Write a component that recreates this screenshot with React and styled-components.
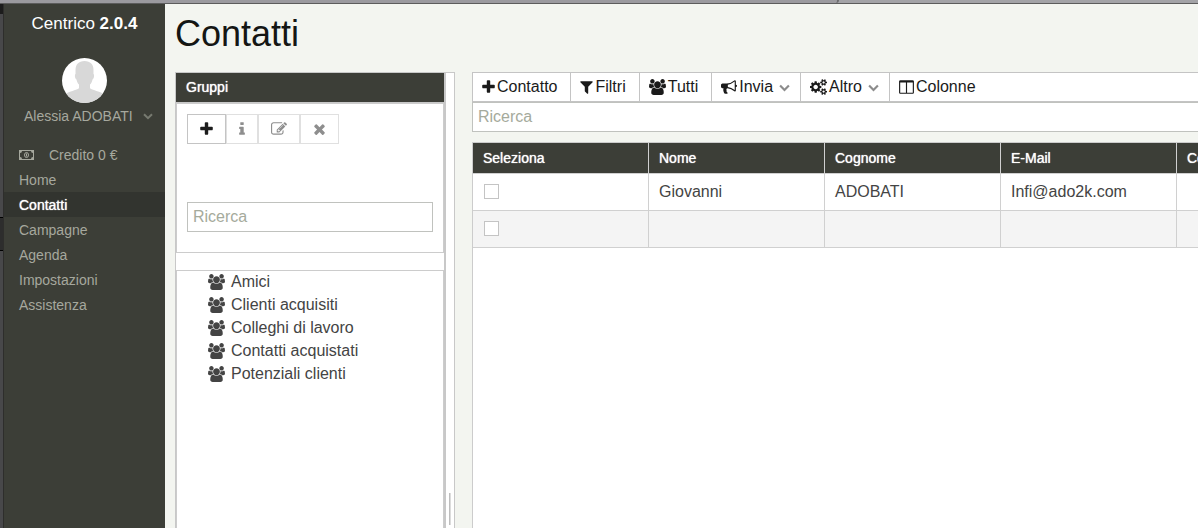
import React from 'react';
import styled, { createGlobalStyle } from 'styled-components';

const GlobalStyle = createGlobalStyle`
  * {
    box-sizing: border-box;
  }

  body {
    margin: 0;
    overflow: hidden;
    background: #f3f5f0;
    color: #444;
    font-family: 'Liberation Sans', Arial, sans-serif;
    font-size: 16px;
  }

  button,
  input {
    font: inherit;
  }
`;

const Page = styled.div`
  display: flex;
  flex-direction: column;
  height: 100vh;
  overflow: hidden;
`;

const WindowEdge = styled.div`
  display: flex;
  flex: none;
  height: 4px;
  background: #a3a3a7;
  border-bottom: 1px solid #5c5c5c;
`;

const EdgeTab = styled.div`
  width: 70%;
  background: #9b9a9f;
  border-right: 2px solid #6c6c6e;
  border-bottom-right-radius: 3px;
`;

const Body = styled.div`
  display: flex;
  flex: 1;
  min-height: 0;
`;

const Strip = styled.div`
  display: flex;
  flex-direction: column;
  flex: none;
  width: 4px;
  background: #48484a;
  border-right: 1px solid #2e2e2c;
`;

const StripCorner = styled.div`
  height: 10px;
  margin-bottom: 203px;
  background: #1c1c1c;
`;

const StripMark = styled.div`
  height: 34px;
  background: #2d2d2d;
  border-top: 1px solid #000;
  border-bottom: 1px solid #000;
`;

const Sidebar = styled.aside`
  flex: none;
  width: 161px;
  background: #3c3e37;
  color: #a6a89e;
  font-size: 14px;
`;

const Brand = styled.div`
  padding-top: 8px;
  height: 54px;
  color: #fff;
  font-size: 17px;
  line-height: 23px;
  text-align: center;
`;

const Avatar = styled.svg`
  display: block;
  width: 45px;
  height: 45px;
  margin: 0 auto;
`;

const UserButton = styled.button`
  display: flex;
  align-items: center;
  gap: 10px;
  width: 100%;
  height: 25px;
  margin-bottom: 14px;
  padding: 0 0 0 20px;
  border: 0;
  background: none;
  color: inherit;
`;

const NavLink = styled.a`
  display: flex;
  align-items: center;
  gap: 15px;
  height: 25px;
  padding: 0 14px 0 15px;
  background: ${({ $active }) => ($active ? '#32342f' : 'transparent')};
  color: ${({ $active }) => ($active ? '#fff' : 'inherit')};
  text-decoration: none;
  text-shadow: ${({ $active }) => ($active ? '0 0 1px #fff' : 'none')};
`;

const Main = styled.main`
  display: flex;
  flex: 1;
  flex-direction: column;
  min-width: 0;
  padding-left: 10px;
`;

const Title = styled.h1`
  flex: none;
  height: 68px;
  margin: 0;
  color: #141614;
  font-size: 36px;
  font-weight: normal;
  line-height: 60px;
`;

const Panes = styled.div`
  display: flex;
  flex: 1;
  min-height: 0;
`;

const GroupsPane = styled.section`
  display: flex;
  flex: none;
  flex-direction: column;
  width: 270px;
  background: #fff;
  border: 1px solid #c8c8c8;
  border-bottom: 0;
`;

const PaneHeader = styled.h2`
  flex: none;
  height: 30px;
  margin: 0;
  padding-left: 10px;
  background: #3c3e37;
  border-bottom: 1px solid #c8c8c8;
  color: #fff;
  font-size: 14px;
  font-weight: normal;
  line-height: 29px;
  text-shadow: 0 0 1px #fff;
`;

const GroupTools = styled.div`
  flex: none;
  margin-bottom: 17px;
  padding: 10px 10px 20px;
  border: 1px solid #ccc;
`;

const ButtonGroup = styled.div`
  display: flex;
  margin-bottom: 58px;
`;

const ToolButton = styled.button`
  display: flex;
  align-items: center;
  justify-content: center;
  height: 30px;
  padding: 0 12px;
  background: #fff;
  border: 1px solid #c4c4c4;
  color: #1c1c1c;

  &:disabled {
    border-color: #e0e0e0;
    color: #8e8e8e;
  }
`;

const SearchInput = styled.input`
  display: block;
  width: 100%;
  height: 30px;
  padding: 0 5px;
  background: #fff;
  border: 1px solid #c0c2be;
  border-radius: 0;
  outline: none;

  &::placeholder {
    color: #a5aa9c;
    opacity: 1;
  }
`;

const GroupList = styled.ul`
  flex: 1;
  margin: 0;
  padding: 0 0 0 31px;
  border: 1px solid #ccc;
  border-bottom: 0;
  list-style: none;
`;

const GroupItem = styled.li`
  display: flex;
  align-items: center;
  gap: 6px;
  height: 23px;
  padding-bottom: 2px;
  color: #444;
`;

const Splitter = styled.div`
  display: flex;
  flex: none;
  flex-direction: column;
  align-items: center;
  justify-content: flex-end;
  width: 10px;
  padding-bottom: 3px;
  background: #fff;
  border: 1px solid #c8c8c8;
  border-bottom: 0;
`;

const SplitterGrip = styled.div`
  width: 2px;
  height: 32px;
  background: #dcdcdc;
  border-left: 1px solid #bdbdbd;
`;

const ContactsPane = styled.section`
  display: flex;
  flex: 1;
  flex-direction: column;
  min-width: 0;
  margin-left: 17px;
`;

const Toolbar = styled.div`
  display: flex;
  flex: none;
  height: 30px;
  background: #fff;
  border: 1px solid #c4c4c4;
  border-right: 0;
`;

const BarButton = styled.button`
  display: flex;
  flex: none;
  align-items: center;
  gap: 2px;
  padding: 0 13px 0 9px;
  background: none;
  border: 0;
  border-right: 1px solid #c4c4c4;
  color: #1a1a1a;

  &:last-child {
    border-right: 0;
  }
`;

const MenuButton = styled(BarButton)`
  padding-right: 10px;
`;

const BarLabel = styled.span`
  padding-right: ${({ $menu }) => ($menu ? '4px' : '0')};
`;

const WideSearch = styled(SearchInput)`
  flex: none;
  margin-bottom: 10px;
  border-right: 0;
`;

const Grid = styled.div`
  flex: 1;
  min-height: 0;
  overflow: hidden;
  background: #fff;
  border-top: 1px solid #ccc;
  border-left: 1px solid #ccc;
`;

const Table = styled.table`
  width: 1056px;
  border-collapse: separate;
  border-spacing: 0;
  table-layout: fixed;
`;

const HeadCell = styled.th`
  height: 31px;
  padding: 0 10px;
  background: #3c3e37;
  border-right: 1px solid #d0d0d0;
  border-bottom: 1px solid #d0d0d0;
  color: #fff;
  font-size: 14px;
  font-weight: normal;
  text-align: left;
  text-shadow: 0 0 1px #fff;
`;

const Row = styled.tr`
  background: #fff;

  &:nth-child(even) {
    background: #f4f4f4;
  }
`;

const Cell = styled.td`
  height: 37px;
  padding: 0 10px;
  border-right: 1px solid #d0d0d0;
  border-bottom: 1px solid #d0d0d0;
`;

const Checkbox = styled.input`
  display: block;
  width: 15px;
  height: 15px;
  margin: 0 1px 1px;
  appearance: none;
  background: #fff;
  border: 1px solid #c4c4c4;
`;

const IconSvg = styled.svg`
  display: block;
  flex: none;
  fill: currentColor;
`;

// x = left edge of the glyph, w = its width, on a 1792 unit em
const GLYPHS = {
  plus: {
    x: 192,
    w: 1408,
    d: 'M1600 736v192q0 40-28 68t-68 28h-416v416q0 40-28 68t-68 28h-192q-40 0-68-28t-28-68v-416h-416q-40 0-68-28t-28-68v-192q0-40 28-68t68-28h416v-416q0-40 28-68t68-28h192q40 0 68 28t28 68v416h416q40 0 68 28t28 68z',
  },
  info: {
    x: 576,
    w: 640,
    d: 'M1216 1344v128q0 26-19 45t-45 19h-512q-26 0-45-19t-19-45v-128q0-26 19-45t45-19h64v-384h-64q-26 0-45-19t-19-45v-128q0-26 19-45t45-19h384q26 0 45 19t19 45v576h64q26 0 45 19t19 45zm-128-1152v192q0 26-19 45t-45 19h-256q-26 0-45-19t-19-45v-192q0-26 19-45t45-19h256q26 0 45 19t19 45z',
  },
  edit: {
    x: 0,
    w: 1792,
    d: 'M888 1184l116-116-152-152-116 116v56h96v96h56zm440-720q-16-16-33 1l-350 350q-17 17-1 33t33-1l350-350q17-17 1-33zm80 594v190q0 119-84.5 203.5t-203.5 84.5h-832q-119 0-203.5-84.5t-84.5-203.5v-832q0-119 84.5-203.5t203.5-84.5h832q63 0 117 25 15 7 18 23 3 17-9 29l-49 49q-14 14-32 8-23-6-45-6h-832q-66 0-113 47t-47 113v832q0 66 47 113t113 47h832q66 0 113-47t47-113v-126q0-13 9-22l64-64q15-15 35-7t20 29zm-96-738l288 288-672 672h-288v-288zm444 132l-92 92-288-288 92-92q28-28 68-28t68 28l152 152q28 28 28 68t-28 68z',
  },
  times: {
    x: 192,
    w: 1408,
    d: 'M1490 1322q0 40-28 68l-136 136q-28 28-68 28t-68-28l-294-294-294 294q-28 28-68 28t-68-28l-136-136q-28-28-28-68t28-68l294-294-294-294q-28-28-28-68t28-68l136-136q28-28 68-28t68 28l294 294 294-294q28-28 68-28t68 28l136 136q28 28 28 68t-28 68l-294 294 294 294q28 28 28 68z',
  },
  users: {
    x: 0,
    w: 1920,
    d: 'M593 896q-162 5-265 128h-134q-82 0-138-40.5t-56-118.5q0-353 124-353 6 0 43.5 21t97.5 42.5 119 21.5q67 0 133-23-5 37-5 66 0 139 81 256zm1071 637q0 120-73 189.5t-194 69.5h-874q-121 0-194-69.5t-73-189.5q0-53 3.5-103.5t14-109 26.5-108.5 43-97.5 62-81 85.5-53.5 111.5-20q10 0 43 21.5t73 48 107 48 135 21.5 135-21.5 107-48 73-48 43-21.5q61 0 111.5 20t85.5 53.5 62 81 43 97.5 26.5 108.5 14 109 3.5 103.5zm-1024-1277q0 106-75 181t-181 75-181-75-75-181 75-181 181-75 181 75 75 181zm704 384q0 159-112.5 271.5t-271.5 112.5-271.5-112.5-112.5-271.5 112.5-271.5 271.5-112.5 271.5 112.5 112.5 271.5zm576 225q0 78-56 118.5t-138 40.5h-134q-103-123-265-128 81-117 81-256 0-29-5-66 66 23 133 23 59 0 119-21.5t97.5-42.5 43.5-21q124 0 124 353zm-128-609q0 106-75 181t-181 75-181-75-75-181 75-181 181-75 181 75 75 181z',
  },
  filter: {
    x: 192,
    w: 1408,
    d: 'M1595 295q17 41-14 70l-493 493v742q0 42-39 59-13 5-25 5-27 0-45-19l-256-256q-19-19-19-45v-486l-493-493q-31-29-14-70 17-39 59-39h1280q42 0 59 39z',
  },
  bullhorn: {
    x: 0,
    w: 1792,
    d: 'M1664 640q53 0 90.5 37.5t37.5 90.5-37.5 90.5-90.5 37.5v384q0 52-38 90t-90 38q-417-347-812-380-58 19-91 66t-31 100.5 40 92.5q-20 33-23 65.5t6 58 33.5 55 48 50 61.5 50.5q-29 58-111.5 83t-168.5 11.5-132-55.5q-7-23-29.5-87.5t-32-94.5-23-89-15-101 3.5-98.5 22-110.5h-122q-66 0-113-47t-47-113v-192q0-66 47-113t113-47h480q435 0 896-384 52 0 90 38t38 90v384zm-128 604v-954q-394 302-768 343v270q377 42 768 341z',
  },
  cogs: {
    x: 0,
    w: 1920,
    d: 'M896 896q0-106-75-181t-181-75-181 75-75 181 75 181 181 75 181-75 75-181zm768 512q0-52-38-90t-90-38-90 38-38 90q0 53 37.5 90.5t90.5 37.5 90.5-37.5 37.5-90.5zm0-1024q0-52-38-90t-90-38-90 38-38 90q0 53 37.5 90.5t90.5 37.5 90.5-37.5 37.5-90.5zm-384 421v185q0 10-7 19.5t-16 10.5l-155 24q-11 35-32 76 34 48 90 115 7 11 7 20 0 12-7 19-23 30-82.5 89.5t-78.5 59.5q-11 0-21-7l-115-90q-37 19-77 31-11 108-23 155-7 24-30 24h-186q-11 0-20-7.5t-10-17.5l-23-153q-34-10-75-31l-118 89q-7 7-20 7-11 0-21-8-144-133-144-160 0-9 7-19 10-14 41-53t47-61q-23-44-35-82l-152-24q-10-1-17-9.5t-7-19.5v-185q0-10 7-19.5t16-10.5l155-24q11-35 32-76-34-48-90-115-7-11-7-20 0-12 7-20 22-30 82-89t79-59q11 0 21 7l115 90q34-18 77-32 11-108 23-154 7-24 30-24h186q11 0 20 7.5t10 17.5l23 153q34 10 75 31l118-89q8-7 20-7 11 0 21 8 144 133 144 160 0 8-7 19-12 16-42 54t-45 60q23 48 34 82l152 23q10 2 17 10.5t7 19.5zm640 533v140q0 16-149 31-12 27-30 52 51 113 51 138 0 4-4 7-122 71-124 71-8 0-46-47t-52-68q-20 2-30 2t-30-2q-14 21-52 68t-46 47q-2 0-124-71-4-3-4-7 0-25 51-138-18-25-30-52-149-15-149-31v-140q0-16 149-31 13-29 30-52-51-113-51-138 0-4 4-7 4-2 35-20t59-34 30-16q8 0 46 46.5t52 67.5q20-2 30-2t30 2q51-71 92-112l6-2q4 0 124 70 4 3 4 7 0 25-51 138 17 23 30 52 149 15 149 31zm0-1024v140q0 16-149 31-12 27-30 52 51 113 51 138 0 4-4 7-122 71-124 71-8 0-46-47t-52-68q-20 2-30 2t-30-2q-14 21-52 68t-46 47q-2 0-124-71-4-3-4-7 0-25 51-138-18-25-30-52-149-15-149-31v-140q0-16 149-31 13-29 30-52-51-113-51-138 0-4 4-7 4-2 35-20t59-34 30-16q8 0 46 46.5t52 67.5q20-2 30-2t30 2q51-71 92-112l6-2q4 0 124 70 4 3 4 7 0 25-51 138 17 23 30 52 149 15 149 31z',
  },
  columns: {
    x: 64,
    w: 1664,
    d: 'M224 1536h608v-1152h-640v1120q0 13 9.5 22.5t22.5 9.5zm1376-32v-1120h-640v1152h608q13 0 22.5-9.5t9.5-22.5zm128-1216v1216q0 66-47 113t-113 47h-1344q-66 0-113-47t-47-113v-1216q0-66 47-113t113-47h1344q66 0 113 47t47 113z',
  },
};

const Icon = ({ name }) => {
  const glyph = GLYPHS[name];
  return (
    <IconSvg
      width={Math.round(glyph.w / 112)}
      height="16"
      viewBox={`${glyph.x} 0 ${glyph.w} 1792`}
      aria-hidden="true"
    >
      <path d={glyph.d} />
    </IconSvg>
  );
};

const Chevron = ({ size, color }) => (
  <IconSvg width={size} height={size} viewBox="0 0 10 10" aria-hidden="true">
    <path d="M1 3.2l4 4 4-4" fill="none" stroke={color} strokeWidth="2" />
  </IconSvg>
);

const MoneyIcon = () => (
  <IconSvg width="15" height="10" viewBox="0 0 15 10" aria-hidden="true">
    <path
      fillRule="evenodd"
      d="M0 0h15v10H0zM3 1a2 2 0 0 1-2 2v4a2 2 0 0 1 2 2h9a2 2 0 0 1 2-2V3a2 2 0 0 1-2-2z"
    />
    <ellipse cx="7.5" cy="5" rx="2" ry="2.5" fill="none" stroke="currentColor" />
    <path d="M7 3.5h1v3H7z" />
  </IconSvg>
);

const UserPhoto = () => (
  <Avatar viewBox="0 0 45 45" aria-hidden="true">
    <defs>
      <clipPath id="photo">
        <circle cx="22.5" cy="22.5" r="22.5" />
      </clipPath>
    </defs>
    <g clipPath="url(#photo)">
      <path fill="#fff" d="M0 0h45v45H0z" />
      <path
        fill="#d8d8d8"
        d="M22.500 3c-6 0-9 3.500-9 9v4c-1 .5-.7 4.500 1 5.500.5 2.500 1.300 4 2.500 5v3.500c-1 1.800-8 3-11 4.500-2 1-3 2.500-3.500 4V45h40v-6.500c-.5-1.500-1.500-3-3.500-4-3-1.500-10-2.700-11-4.500v-3.500c1.200-1 2-2.500 2.500-5 1.700-1 2-5 1-5.500v-4c0-5.500-3-9-9-9z"
      />
    </g>
  </Avatar>
);

const menu = ['Home', 'Contatti', 'Campagne', 'Agenda', 'Impostazioni', 'Assistenza'];

const groups = [
  'Amici',
  'Clienti acquisiti',
  'Colleghi di lavoro',
  'Contatti acquistati',
  'Potenziali clienti',
];

const actions = [
  { icon: 'plus', label: 'Contatto' },
  { icon: 'filter', label: 'Filtri' },
  { icon: 'users', label: 'Tutti' },
  { icon: 'bullhorn', label: 'Invia', menu: true },
  { icon: 'cogs', label: 'Altro', menu: true },
  { icon: 'columns', label: 'Colonne' },
];

const columns = ['Seleziona', 'Nome', 'Cognome', 'E-Mail', 'Cellulare', ''];

const contacts = [
  ['Giovanni', 'ADOBATI', 'Infi@ado2k.com', '', ''],
  ['', '', '', '', ''],
];

const SideMenu = () => (
  <Sidebar>
    <Brand>
      Centrico <b>2.0.4</b>
    </Brand>
    <UserPhoto />
    <UserButton type="button">
      Alessia ADOBATI
      <Chevron size={10} color="#777a70" />
    </UserButton>
    <nav>
      <NavLink href="#credito">
        <MoneyIcon />
        Credito 0 €
      </NavLink>
      {menu.map((item) => (
        <NavLink key={item} href={`#${item.toLowerCase()}`} $active={item === 'Contatti'}>
          {item}
        </NavLink>
      ))}
    </nav>
  </Sidebar>
);

const Groups = () => (
  <GroupsPane>
    <PaneHeader>Gruppi</PaneHeader>
    <GroupTools>
      <ButtonGroup>
        <ToolButton type="button" aria-label="Aggiungi">
          <Icon name="plus" />
        </ToolButton>
        <ToolButton type="button" aria-label="Informazioni" disabled>
          <Icon name="info" />
        </ToolButton>
        <ToolButton type="button" aria-label="Modifica" disabled>
          <Icon name="edit" />
        </ToolButton>
        <ToolButton type="button" aria-label="Elimina" disabled>
          <Icon name="times" />
        </ToolButton>
      </ButtonGroup>
      <SearchInput type="text" placeholder="Ricerca" aria-label="Ricerca gruppi" />
    </GroupTools>
    <GroupList>
      {groups.map((group) => (
        <GroupItem key={group}>
          <Icon name="users" />
          {group}
        </GroupItem>
      ))}
    </GroupList>
  </GroupsPane>
);

const Contacts = () => (
  <ContactsPane>
    <Toolbar>
      {actions.map((action) => {
        const Button = action.menu ? MenuButton : BarButton;
        return (
          <Button key={action.label} type="button">
            <Icon name={action.icon} />
            <BarLabel $menu={action.menu}>{action.label}</BarLabel>
            {action.menu && <Chevron size={11} color="#8c8c8c" />}
          </Button>
        );
      })}
    </Toolbar>
    <WideSearch type="text" placeholder="Ricerca" aria-label="Ricerca contatti" />
    <Grid>
      <Table>
        <thead>
          <tr>
            {columns.map((column) => (
              <HeadCell key={column}>{column}</HeadCell>
            ))}
          </tr>
        </thead>
        <tbody>
          {contacts.map((contact, index) => (
            <Row key={index}>
              <Cell>
                <Checkbox type="checkbox" aria-label={`Seleziona riga ${index + 1}`} />
              </Cell>
              {contact.map((value, i) => (
                <Cell key={i}>{value}</Cell>
              ))}
            </Row>
          ))}
        </tbody>
      </Table>
    </Grid>
  </ContactsPane>
);

const App = () => (
  <>
    <GlobalStyle />
    <Page>
      <WindowEdge>
        <EdgeTab />
      </WindowEdge>
      <Body>
        <Strip>
          <StripCorner />
          <StripMark />
        </Strip>
        <SideMenu />
        <Main>
          <Title>Contatti</Title>
          <Panes>
            <Groups />
            <Splitter>
              <SplitterGrip />
            </Splitter>
            <Contacts />
          </Panes>
        </Main>
      </Body>
    </Page>
  </>
);

export default App;
